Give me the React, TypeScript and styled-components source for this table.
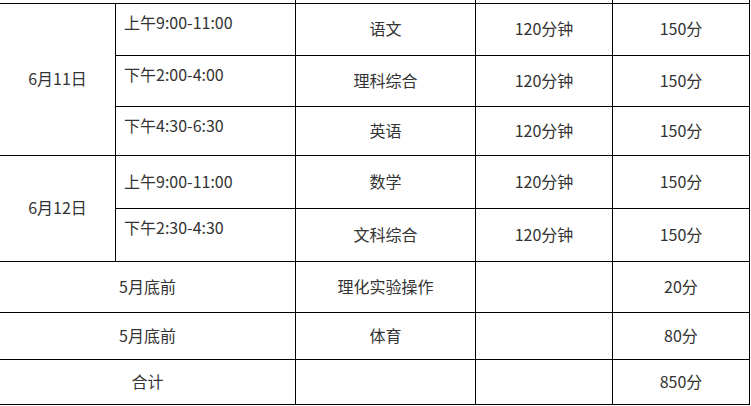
import styled, { createGlobalStyle } from 'styled-components';

const GlobalStyle = createGlobalStyle`
  html, body {
    margin: 0;
    padding: 0;
    background: #ffffff;
    overflow: hidden;
  }
`;

const Page = styled.div`
  width: 751px;
  height: 406px;
  overflow: hidden;
  font-family: 'Noto Sans CJK SC', 'Noto Sans', sans-serif;
`;

const TableWrap = styled.div`
  margin: -17px 0 0 -1px;
`;

const ScoreTable = styled.table`
  width: 750px;
  table-layout: fixed;
  border-collapse: collapse;
  font-size: 16px;
  color: #333333;
`;

const Row = styled.tr<{ $h: number }>`
  height: ${p => p.$h}px;
`;

const Cell = styled.td<{ $align?: 'left' | 'center'; $top?: boolean }>`
  border: 1px solid #000000;
  padding: ${p => (p.$top ? '6px 8px 0' : '0 8px 3px')};
  text-align: ${p => p.$align ?? 'center'};
  vertical-align: ${p => (p.$top ? 'top' : 'middle')};
  line-height: 24px;
  white-space: nowrap;
`;

type Exam = { time: string; subject: string; duration: string; score: string; top: boolean; h: number };

const days: { date: string; exams: Exam[] }[] = [
  {
    date: '6月11日',
    exams: [
      { time: '上午9:00-11:00', subject: '语文', duration: '120分钟', score: '150分', top: true, h: 52 },
      { time: '下午2:00-4:00', subject: '理科综合', duration: '120分钟', score: '150分', top: true, h: 51 },
      { time: '下午4:30-6:30', subject: '英语', duration: '120分钟', score: '150分', top: true, h: 49 },
    ],
  },
  {
    date: '6月12日',
    exams: [
      { time: '上午9:00-11:00', subject: '数学', duration: '120分钟', score: '150分', top: false, h: 53 },
      { time: '下午2:30-4:30', subject: '文科综合', duration: '120分钟', score: '150分', top: true, h: 53 },
    ],
  },
];

const extras = [
  { when: '5月底前', subject: '理化实验操作', score: '20分', h: 51 },
  { when: '5月底前', subject: '体育', score: '80分', h: 47 },
  { when: '合计', subject: '', score: '850分', h: 45 },
];

export default function App() {
  return (
    <Page>
      <GlobalStyle />
      <TableWrap>
        <ScoreTable>
          <colgroup>
            <col style={{ width: 116 }} />
            <col style={{ width: 180 }} />
            <col style={{ width: 180 }} />
            <col style={{ width: 137 }} />
            <col style={{ width: 137 }} />
          </colgroup>
          <tbody>
            <Row $h={20}>
              <Cell colSpan={2} />
              <Cell />
              <Cell />
              <Cell />
            </Row>
            {days.map(day =>
              day.exams.map((exam, i) => (
                <Row key={day.date + exam.time} $h={exam.h}>
                  {i === 0 && <Cell rowSpan={day.exams.length}>{day.date}</Cell>}
                  <Cell $align="left" $top={exam.top}>{exam.time}</Cell>
                  <Cell>{exam.subject}</Cell>
                  <Cell>{exam.duration}</Cell>
                  <Cell>{exam.score}</Cell>
                </Row>
              ))
            )}
            {extras.map((row, i) => (
              <Row key={i} $h={row.h}>
                <Cell colSpan={2}>{row.when}</Cell>
                <Cell>{row.subject}</Cell>
                <Cell />
                <Cell>{row.score}</Cell>
              </Row>
            ))}
          </tbody>
        </ScoreTable>
      </TableWrap>
    </Page>
  );
}
